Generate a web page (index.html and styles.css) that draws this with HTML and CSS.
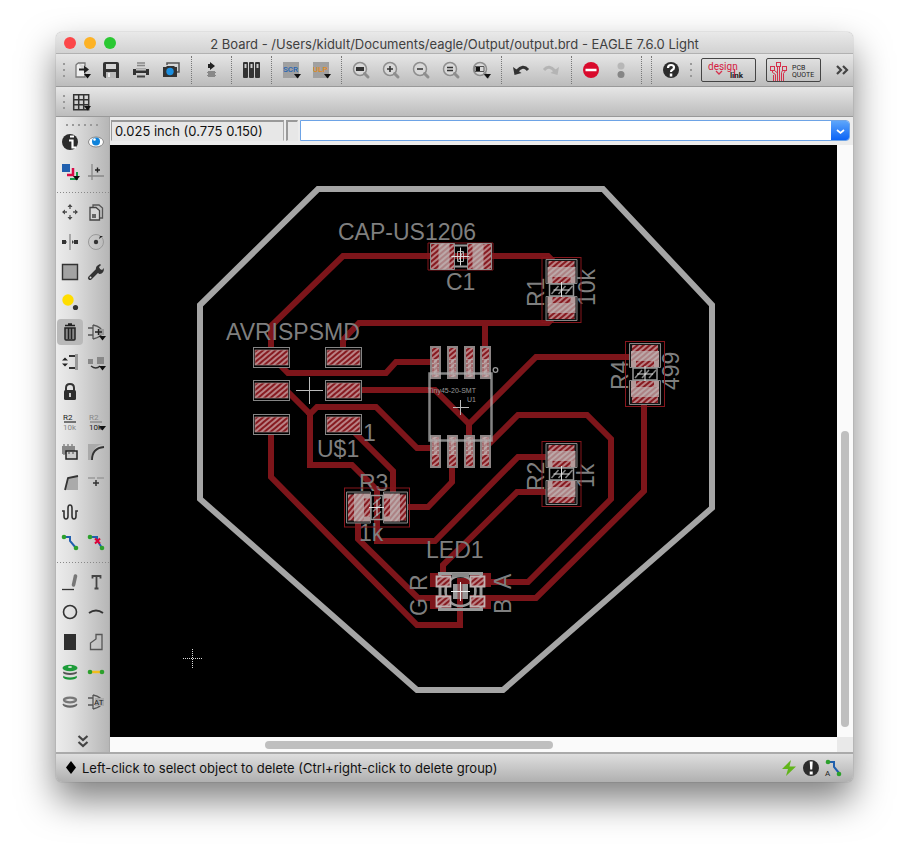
FILE: index.html
```html
<!DOCTYPE html>
<html lang="en">
<head>
<meta charset="utf-8">
<title>2 Board - output.brd</title>
<link rel="stylesheet" href="styles.css">
</head>
<body>
<svg class="defs" aria-hidden="true">
  <symbol id="drop" viewBox="0 0 20 20"><path d="M13 14h7l-3.500 4.500z" fill="#111"/></symbol>
  <symbol id="lens" viewBox="0 0 20 20"><circle cx="9" cy="9" r="6.500" fill="#d8d8d8" stroke="#8e8e8e" stroke-width="1.500"/><path d="M13.500 13.500l3.500 3.500" stroke="#8e8e8e" stroke-width="3" stroke-linecap="round"/></symbol>
</svg>
<main class="window">
  <header class="titlebar">
    <div class="lights"><button class="light close" aria-label="Close"></button><button class="light minimize" aria-label="Minimize"></button><button class="light zoom" aria-label="Zoom"></button></div>
    <h1>2 Board - /Users/kidult/Documents/eagle/Output/output.brd - EAGLE 7.6.0 Light</h1>
  </header>

  <nav class="toolbar" aria-label="Actions">
    <i class="grip"></i>
    <button aria-label="Open"><svg viewBox="0 0 20 20"><path d="M7 3h7v3M14 13v4H5V5l2-2" fill="#eee" stroke="#777" stroke-width="1.300"/><path d="M8 9.500h6" stroke="#222" stroke-width="2.200"/><path d="M13 5.500l5 4-5 4z" fill="#222"/><use href="#drop"/></svg></button>
    <button aria-label="Save"><svg viewBox="0 0 20 20"><path d="M2 4q0-2 2-2h12q2 0 2 2v14H4l-2-2z" fill="#333"/><path d="M5 4h10v5H5z" fill="#d6d6d6"/><path d="M5 12h10v6H5z" fill="#bbb"/><path d="M7 13h2v4H7z" fill="#eee"/></svg></button>
    <button aria-label="Print"><svg viewBox="0 0 20 20"><path d="M6 3h8M6 5.500h8" stroke="#888" stroke-width="1.600"/><path d="M2 9h3v1.500h10V9h3v6h-3v-2H5v2H2z" fill="#333"/><path d="M5 8h10v1.500H5z" fill="#aaa"/><path d="M6 15.500h8v2H6z" fill="#444"/></svg></button>
    <button aria-label="Export image"><svg viewBox="0 0 20 20"><path d="M6 5V3h12v9h-3" fill="none" stroke="#555" stroke-width="1.500"/><path d="M2 7h3l1-1h7l1 1h2v10H2z" fill="#333"/><circle cx="9" cy="11.500" r="3.700" fill="#1b8fe0"/></svg></button>
    <i class="sep"></i>
    <button aria-label="Switch to schematic"><svg viewBox="0 0 20 20"><path d="M9 2l5 4-5 4V8H7V4h2z" fill="#222"/><path d="M7 11h7v6H7z" fill="#888"/><path d="M6 12.500h9M6 15.500h9" stroke="#888"/></svg></button>
    <i class="sep"></i>
    <button aria-label="Library"><svg viewBox="0 0 20 20"><g fill="#333"><rect x="2" y="2" width="5" height="16" rx="1"/><rect x="8" y="2" width="5" height="16" rx="1"/><rect x="14" y="2" width="5" height="16" rx="1"/></g><path d="M3.500 4h2v4h-2zM9.500 4h2v4h-2zM15.500 4h2v4h-2z" fill="#ccc"/></svg></button>
    <i class="sep"></i>
    <button aria-label="Run script"><svg viewBox="0 0 20 20"><path d="M2 2h16v16H2z" fill="#a0a0a0"/><text class="tiny script" x="2" y="12">SCR</text><use href="#drop"/></svg></button>
    <button aria-label="Run ULP"><svg viewBox="0 0 20 20"><path d="M2 2h16v16H2z" fill="#a0a0a0"/><text class="tiny ulp" x="2" y="12">ULP</text><use href="#drop"/></svg></button>
    <i class="sep"></i>
    <button aria-label="Zoom to fit"><svg viewBox="0 0 20 20"><use href="#lens"/><path d="M5 7h8v4H5z" fill="#333"/></svg></button>
    <button aria-label="Zoom in"><svg viewBox="0 0 20 20"><use href="#lens"/><path d="M6 9h6M9 6v6" stroke="#333" stroke-width="1.600"/></svg></button>
    <button aria-label="Zoom out"><svg viewBox="0 0 20 20"><use href="#lens"/><path d="M6 9h6" stroke="#333" stroke-width="1.600"/></svg></button>
    <button aria-label="Redraw"><svg viewBox="0 0 20 20"><use href="#lens"/><path d="M6 7.500h6M6 10.500h6" stroke="#333" stroke-width="1.600"/></svg></button>
    <button aria-label="Zoom to selection"><svg viewBox="0 0 20 20"><use href="#lens"/><path d="M4 6.500h9v5H4z" fill="none" stroke="#555"/><path d="M5 7h4v4H5z" fill="#111"/><use href="#drop"/></svg></button>
    <i class="sep"></i>
    <button aria-label="Undo"><svg viewBox="0 0 20 20"><path d="M17 10Q12 4 6 11" fill="none" stroke="#333" stroke-width="3"/><path d="M2 7l1.500 8 7-2z" fill="#333"/></svg></button>
    <button aria-label="Redo" disabled><svg viewBox="0 0 20 20"><path d="M3 10Q8 4 14 11" fill="none" stroke="#b4b4b4" stroke-width="3"/><path d="M18 7l-1.500 8-7-2z" fill="#b4b4b4"/></svg></button>
    <i class="sep"></i>
    <button aria-label="Stop"><svg viewBox="0 0 20 20"><circle cx="10" cy="10" r="8" fill="#d90a2c"/><path d="M4.500 10h11" stroke="#fff" stroke-width="2.600"/></svg></button>
    <button aria-label="Go" disabled><svg viewBox="0 0 20 20"><circle cx="10" cy="6" r="3.500" fill="#b7b7b7"/><circle cx="10" cy="14.500" r="3.500" fill="#858585"/></svg></button>
    <i class="sep"></i><i class="sep"></i>
    <button aria-label="Help"><svg viewBox="0 0 20 20"><circle cx="10" cy="10" r="8" fill="#2c2c2c"/><path d="M7 8q0-3 3-3t3 2.500q0 1.500-1.500 2.300T10 12" fill="none" stroke="#fff" stroke-width="2.200"/><path d="M8.800 13.500h2.500v3H8.800z" fill="#fff"/></svg></button>
    <i class="grip"></i>
    <a class="brand" href="#" aria-label="design link"><svg viewBox="0 0 53 22"><text class="design" x="6" y="11">design</text><path d="M14 12l3 3 3-3M32.500 10v9" fill="none" stroke="#d5304c" stroke-width="1.300"/><text class="link" x="28" y="19">link</text></svg></a>
    <a class="brand" href="#" aria-label="PCB Quote"><svg viewBox="0 0 53 22"><g fill="none" stroke="#d5304c"><rect x="3.500" y="7.500" width="4" height="4"/><rect x="9.500" y="3.500" width="4" height="4"/><rect x="15.500" y="7.500" width="4" height="4"/><path d="M5.500 11.500v2l3 2V22M7.500 11.500l3 2.500v8M10.500 8v6M12.500 8v14M15.500 11.500l-1 2V22M18.500 11.500l-2 3V22M6.500 16v6"/></g><text class="pcb" x="25" y="11">PCB</text><text class="pcb" x="25" y="18">QUOTE</text></svg></a>
    <button class="more" aria-label="More tools"><svg viewBox="0 0 20 20"><path d="M4 6l4 4-4 4M10 6l4 4-4 4" fill="none" stroke="#444" stroke-width="2.200"/></svg></button>
  </nav>

  <nav class="toolbar parameters" aria-label="Parameters">
    <i class="grip"></i>
    <button aria-label="Grid"><svg viewBox="0 0 20 20"><path d="M2.700 2.700h15v15h-15zM7.700 2.700v15M12.700 2.700v15M2.700 7.700h15M2.700 12.700h15" fill="none" stroke="#333" stroke-width="1.500"/><use href="#drop"/></svg></button>
  </nav>

  <div class="body">
    <aside class="palette" aria-label="Tools">
      <i class="palette-grip"></i>
      <div class="tools">
        <button aria-label="Info"><svg viewBox="0 0 20 20"><circle cx="10" cy="10" r="8" fill="#2c2c2c"/><path d="M10 4.500h4M9 8.500h3.500v7H16" stroke="#fff" stroke-width="2.200" fill="none"/></svg></button>
        <button aria-label="Show"><svg viewBox="0 0 20 20"><ellipse cx="10" cy="10" rx="7.500" ry="5" fill="#fff" stroke="#888"/><circle cx="10" cy="9.500" r="4" fill="#0f83db"/><circle cx="8.500" cy="7.500" r="1.300" fill="#fff"/></svg></button>
        <button aria-label="Display"><svg viewBox="0 0 20 20"><path d="M2 2h8v8H2z" fill="#205fae"/><path d="M13 6v7H7" fill="none" stroke="#d90a46" stroke-width="2.500"/><path d="M17 10v7H10" fill="none" stroke="#169b45" stroke-width="2"/><use href="#drop"/></svg></button>
        <button aria-label="Mark"><svg viewBox="0 0 20 20"><path d="M6 2v16M2 14h16" stroke="#888" stroke-width="1.300"/><path d="M9 8h5M11.500 5.500v5" stroke="#222" stroke-width="1.400"/></svg></button>
      </div>
      <hr>
      <div class="tools">
        <button aria-label="Move"><svg viewBox="0 0 20 20"><path d="M10 2l2.500 3h-5zM10 18l2.500-3h-5zM2 10l3-2.500v5zM18 10l-3-2.500v5z" fill="#444"/><path d="M10 4v3M10 13v3M4 10h3M13 10h3" stroke="#555" stroke-width="1.300"/></svg></button>
        <button aria-label="Copy"><svg viewBox="0 0 20 20"><path d="M7 5V3h6l3.500 3v10H14" fill="none" stroke="#555" stroke-width="1.300"/><path d="M4 5.500h6l3.500 3V18H4z" fill="#d6d6d6" stroke="#444" stroke-width="1.300"/><path d="M6 12h4v4H6z" fill="#666"/></svg></button>
        <button aria-label="Mirror"><svg viewBox="0 0 20 20"><path d="M10 2v16" stroke="#888" stroke-width="1.300"/><path d="M2 8h4v4H2zM14 8h4v4h-4z" fill="#333"/><path d="M6 10l1-1v2zM14 10l-2-2v4z" fill="#444"/></svg></button>
        <button aria-label="Rotate"><svg viewBox="0 0 20 20"><circle cx="10" cy="10" r="7.500" fill="none" stroke="#999"/><circle cx="10" cy="10" r="2.200" fill="#333"/><path d="M13 7l1-3h3z" fill="#222"/></svg></button>
        <button aria-label="Group"><svg viewBox="0 0 20 20"><path d="M2.500 2.500h15v15h-15z" fill="#a3a3a3" stroke="#333" stroke-width="1.400"/></svg></button>
        <button aria-label="Change"><svg viewBox="0 0 20 20"><path d="M4 16l8-8" stroke="#333" stroke-width="4" stroke-linecap="round"/><path d="M10 8q-1-4 4-6l1 1-2 2 1 2 2 1 2-2q0 6-5 6z" fill="#333"/><circle cx="4.500" cy="15.500" r="1" fill="#ddd"/></svg></button>
        <button aria-label="Paint"><svg viewBox="0 0 20 20"><circle cx="8" cy="8" r="5.700" fill="#ffdd00"/><circle cx="15.500" cy="15.500" r="2.600" fill="#333"/></svg></button>
        <span></span>
        <button class="active" aria-label="Delete" aria-pressed="true"><svg viewBox="0 0 20 20"><path d="M5 3.500h10M8 2h4" stroke="#222" stroke-width="1.500"/><path d="M5 6h10v11q0 1-1 1H6q-1 0-1-1z" fill="#888" stroke="#222" stroke-width="1.500"/><path d="M8.500 6v11M11.500 6v11" stroke="#222" stroke-width="1.500"/></svg></button>
        <button aria-label="Add"><svg viewBox="0 0 20 20"><path d="M2 6h5M2 13h5M7 3v14M7 3q9 2 9 7t-9 7" fill="none" stroke="#555" stroke-width="1.300"/><path d="M12 7h6v6h-6z" fill="#999"/><path d="M9 10h7M12.500 7v6" stroke="#222" stroke-width="1.400"/><use href="#drop"/></svg></button>
        <button aria-label="Pin swap"><svg viewBox="0 0 20 20"><path d="M2 8.500l3-3 3 3zM2 11.500l3 3 3-3z" fill="#222"/><path d="M9 4h7M9 16h7" stroke="#333" stroke-width="2"/><path d="M16.500 2v16" stroke="#999" stroke-width="3"/></svg></button>
        <button aria-label="Replace"><svg viewBox="0 0 20 20"><path d="M2 7h5v5H2zM11 5h7v7h-7z" fill="#888"/><path d="M5 14q5 4 9 0" fill="none" stroke="#333" stroke-width="1.300"/><use href="#drop"/></svg></button>
        <button aria-label="Lock"><svg viewBox="0 0 20 20"><path d="M6 9V6q0-4 4-4t4 4v3" fill="none" stroke="#333" stroke-width="2"/><rect x="4" y="8" width="12" height="10" rx="1.500" fill="#2c2c2c"/><path d="M9 11h2v4H9z" fill="#ccc"/></svg></button>
        <span></span>
        <button aria-label="Name"><svg viewBox="0 0 20 20"><text class="tiny dark" x="3" y="8">R2</text><path d="M4 10h12" stroke="#444" stroke-width="1.400"/><text class="tiny" x="3" y="18">10k</text></svg></button>
        <button aria-label="Value"><svg viewBox="0 0 20 20"><text class="tiny" x="3" y="8">R2</text><path d="M4 10h12" stroke="#888" stroke-width="1.400"/><text class="tiny dark" x="3" y="18">10k</text><use href="#drop"/></svg></button>
        <button aria-label="Smash"><svg viewBox="0 0 20 20"><path d="M2 4h13v8H2z" fill="#888"/><path d="M4 2v11M8 2v11M12 2v11" stroke="#888" stroke-width="1.500"/><path d="M6 9h11v8H6z" fill="#ccc" stroke="#222" stroke-width="1.500"/><path d="M8 10h2v2H8zM12 10h2v2h-2z" fill="#888"/></svg></button>
        <button aria-label="Miter"><svg viewBox="0 0 20 20"><path d="M2 2h16Q6 3 6 18H2z" fill="#aaa"/><path d="M18 5Q6 6 6 18" fill="none" stroke="#333" stroke-width="1.800"/></svg></button>
        <button aria-label="Split"><svg viewBox="0 0 20 20"><path d="M5 17L8 6l10-2v14H5z" fill="#aaa"/><path d="M5 18L8 6l10-2" fill="none" stroke="#333" stroke-width="1.800"/></svg></button>
        <button aria-label="Optimize"><svg viewBox="0 0 20 20"><path d="M2 6h7M11 6h7" stroke="#999" stroke-width="1.300"/><path d="M7 11h6M10 8v6" stroke="#333" stroke-width="1.500"/></svg></button>
        <button aria-label="Meander"><svg viewBox="0 0 20 20"><path d="M2 9h2v5q0 3 2 3t2-3V6q0-3 2-3t2 3v8q0 3 2 3t2-3V9h2" fill="none" stroke="#333" stroke-width="1.600"/></svg></button>
        <span></span>
        <button aria-label="Route"><svg viewBox="0 0 20 20"><path d="M4 5h6v4l6 7" fill="none" stroke="#205fae" stroke-width="2"/><circle cx="4" cy="5" r="2.300" fill="#2ca02c"/><circle cx="16" cy="16" r="2.300" fill="#2ca02c"/></svg></button>
        <button aria-label="Ripup"><svg viewBox="0 0 20 20"><path d="M4 5h7v3l5 8" fill="none" stroke="#205fae" stroke-width="2"/><circle cx="4" cy="5" r="2.300" fill="#2ca02c"/><circle cx="16" cy="16" r="2.300" fill="#2ca02c"/><path d="M9 6.500l5 5M14 6.500l-5 5" stroke="#e00037" stroke-width="2"/></svg></button>
      </div>
      <hr>
      <div class="tools">
        <button aria-label="Line"><svg viewBox="0 0 20 20"><path d="M2 17.500h12" stroke="#333" stroke-width="1.300"/><path d="M15.500 4l-2 9" stroke="#777" stroke-width="3.500" stroke-linecap="round"/></svg></button>
        <button aria-label="Text"><svg viewBox="0 0 20 20"><path d="M6.500 6.500V4h8v2.500M10.500 4v12.500M8.500 16.500h4" fill="none" stroke="#444" stroke-width="1.800"/></svg></button>
        <button aria-label="Circle"><svg viewBox="0 0 20 20"><circle cx="10" cy="10" r="6.500" fill="none" stroke="#333" stroke-width="1.600"/></svg></button>
        <button aria-label="Arc"><svg viewBox="0 0 20 20"><path d="M3 11q7-5 14 0" fill="none" stroke="#333" stroke-width="1.900"/></svg></button>
        <button aria-label="Rectangle"><svg viewBox="0 0 20 20"><path d="M4 2h12v16H4z" fill="#2f2f2f"/></svg></button>
        <button aria-label="Polygon"><svg viewBox="0 0 20 20"><path d="M4.500 17.500V11L10 7V2.500h6v15z" fill="none" stroke="#555" stroke-width="1.300"/></svg></button>
        <button aria-label="Via"><svg viewBox="0 0 20 20"><ellipse cx="10" cy="15" rx="7" ry="2.700" fill="#199537"/><ellipse cx="10" cy="13" rx="7" ry="2.500" fill="#ddd"/><ellipse cx="10" cy="10.500" rx="7" ry="2.500" fill="#555"/><ellipse cx="10" cy="8.500" rx="7" ry="2.500" fill="#ddd"/><ellipse cx="10" cy="6" rx="7.500" ry="3.200" fill="#1d9c3a"/><ellipse cx="10" cy="5" rx="2" ry="1" fill="#cfe8cf"/></svg></button>
        <button aria-label="Signal"><svg viewBox="0 0 20 20"><path d="M4 10h12" stroke="#f2bd1d" stroke-width="2.500"/><circle cx="4" cy="10" r="2.300" fill="#2ca02c"/><circle cx="16" cy="10" r="2.300" fill="#2ca02c"/></svg></button>
        <button aria-label="Hole"><svg viewBox="0 0 20 20"><ellipse cx="10" cy="12.500" rx="7.300" ry="3.200" fill="#666"/><ellipse cx="10" cy="10.500" rx="7.300" ry="3" fill="#ddd"/><ellipse cx="10" cy="8" rx="6" ry="2.400" fill="#ddd" stroke="#777" stroke-width="2.400"/></svg></button>
        <button aria-label="Attribute"><svg viewBox="0 0 20 20"><path d="M2 6h5M2 13h5M7 3v14M7 3q9 2 9 7t-9 7" fill="none" stroke="#555" stroke-width="1.300"/><path d="M9 6h9v8H9z" fill="#a9a9a9"/><text class="tiny dark" x="8" y="13">AT</text></svg></button>
      </div>
      <button class="palette-more" aria-label="More tools"><svg viewBox="0 0 20 20"><path d="M5.500 4l4.500 4 4.500-4M5.500 10l4.500 4 4.500-4" fill="none" stroke="#444" stroke-width="2.200"/></svg></button>
    </aside>

    <section class="editor">
      <div class="command-row">
        <output class="coords">0.025 inch (0.775 0.150)</output>
        <span class="cell"></span>
        <div class="combo"><input type="text" aria-label="Command line"><button aria-label="Command history"><svg viewBox="0 0 18 20"><path d="M6 9l3.500 3L13 9" fill="none" stroke="#fff" stroke-width="1.700"/></svg></button></div>
      </div>
      <div class="view">
        <svg class="board" viewBox="110 145 727 592" role="img" aria-label="Board layout">
          <defs>
            <pattern id="hatch" width="4" height="4" patternUnits="userSpaceOnUse" patternTransform="rotate(50)"><path d="M0 0h4v4H0z" fill="#b98285"/><path d="M0 0h2v4H0z" fill="#861a20"/></pattern>
            <pattern id="pale" width="4" height="4" patternUnits="userSpaceOnUse" patternTransform="rotate(50)"><path d="M0 0h4v4H0z" fill="#bba8a8"/><path d="M0 0h2v4H0z" fill="#ad8284"/></pattern>
            <g id="avrpad"><rect x=".5" y=".5" width="36" height="20" fill="#000" stroke="#858585"/><rect x="2" y="3" width="33" height="15" fill="url(#hatch)" stroke="#a98b8b" stroke-width=".7"/></g>
            <g id="icpad"><rect x="1" y="1" width="9" height="31" fill="url(#hatch)" stroke="#8d8585" stroke-width="2"/><path d="M2 13h7v18H2z" fill="url(#pale)"/><path d="M3 14v16M8 14v16" stroke="#8f3036" stroke-width=".8" stroke-dasharray="3 1"/></g>
            <g id="chip">
              <rect x="-19.500" y="-32.500" width="39" height="65" fill="none" stroke="#86161d"/>
              <path d="M-15.500-30.500h31v24h-31zM-15.500 6.500h31v24h-31z" fill="#181818" stroke="#858585"/>
              <path d="M-13-29h26v22h-26zM-13 7h26v22h-26z" fill="url(#hatch)"/>
              <path d="M-14-23h28v10h-28zM-14 13h28v10h-28z" fill="url(#pale)"/>
              <path d="M-14-13h5v6h-5zM9-13h5v6H9zM-14 7h5v6h-5zM9 7h5v6H9z" fill="#b39a9a"/>
              <path d="M-12-6h24V6h-24z" fill="none" stroke="#999" stroke-width="1.500"/>
              <path d="M-10 4l7-8M-3 4l7-8M4 4l7-8" stroke="#888" stroke-width="1.500"/>
              <path d="M-8 0H8M0-8V7" stroke="#ddd"/>
            </g>
          </defs>
          <path d="M110 145h727v592H110z"/>
          <g class="trace">
            <path d="M271 352v-26l72-70h205l9 9M343 352v-12l16-17h189l8-8M485 323v28M278 363l10 10h98l10-11h37"/>
            <path d="M360 390h75l34 34v16M469 424l67-67h105M288 392l22 22v51h42l25 25v51h58l83-84h42"/>
            <path d="M308 416l9-9h59l41 41h16M350 428l43 43v25M271 430v47l146 148h43v-44h15"/>
            <path d="M358 515v24l60 59h25M400 507h28l24-25v-20M443 578v-13l74-73h43"/>
            <path d="M485 448l33-33h69l24 24v60l-83 83h-42M644 400v91l-108 107h-48"/>
          </g>
          <path d="M318 189h285l109 116v203L503 690h-86L200 499V305z" fill="none" stroke="#a5a5a5" stroke-width="6"/>
          <g class="label">
            <text x="338" y="240">CAP-US1206</text><text x="446" y="290">C1</text><text x="226" y="340">AVRISPSMD</text><text x="317" y="457">U$1</text><text x="363" y="441">1</text><text x="359" y="491">R3</text><text x="359" y="541">1k</text><text x="426" y="558">LED1</text>
            <text transform="translate(544 307) rotate(-90)">R1</text><text transform="translate(595 306) rotate(-90)">10k</text><text transform="translate(628 390) rotate(-90)">R4</text><text transform="translate(679 390) rotate(-90)">499</text><text transform="translate(544 491) rotate(-90)">R2</text><text transform="translate(594 488) rotate(-90)">1k</text><text transform="translate(427 591) rotate(-90)">R</text><text transform="translate(427 616) rotate(-90)">G</text><text transform="translate(511 589) rotate(-90)">A</text><text transform="translate(511 614) rotate(-90)">B</text>
          </g>
          <use href="#avrpad" x="253" y="347"/><use href="#avrpad" x="253" y="380"/><use href="#avrpad" x="253" y="414"/>
          <use href="#avrpad" x="325" y="347"/><use href="#avrpad" x="325" y="380"/><use href="#avrpad" x="325" y="414"/>
          <use href="#icpad" x="430" y="346"/><use href="#icpad" x="447" y="346"/><use href="#icpad" x="464" y="346"/><use href="#icpad" x="480" y="346"/>
          <g transform="translate(921 814) rotate(180)"><use href="#icpad" x="430" y="346"/><use href="#icpad" x="446" y="346"/><use href="#icpad" x="463" y="346"/><use href="#icpad" x="480" y="346"/></g>
          <path d="M429.500 373.500h62v67h-62z" fill="none" stroke="#b0b0b0" stroke-opacity=".75" stroke-width="2.500"/>
          <circle cx="495.500" cy="370" r="2.300" fill="none" stroke="#999" stroke-width="1.300"/>
          <text class="part" x="428" y="393">Tiny45-20-SMT</text><text class="part" x="467" y="402">U1</text>
          <use href="#chip" x="561.500" y="290"/><use href="#chip" x="645" y="374"/><use href="#chip" x="561.500" y="474"/>
          <use href="#chip" transform="translate(377 507.500) rotate(-90) scale(-1 1)"/>
          <g transform="translate(460.500 256.500)">
            <path d="M-32.500-13.500h65v27h-65z" fill="none" stroke="#86161d"/><path d="M-30-13h24v26h-24zM7-13h24v26H7z" fill="url(#hatch)" stroke="#909090"/><path d="M-22-13H-11v26h-11zM12-13h11v26H12z" fill="url(#pale)"/><path d="M-6-11H7M-6 10H7" stroke="#999" stroke-width="2"/><path d="M-3-5h6V5h-6zM-2 4l4-8" fill="none" stroke="#aaa"/><path d="M-9 0H9M0-9V9" stroke="#ddd"/>
          </g>
          <g>
            <path d="M430 573h21v14h-21zM470 573h21v14h-21zM430 595h21v14h-21zM470 595h21v14h-21z" fill="#7d151a"/>
            <path d="M438 573.500h45M438 609.500h45M440 574v35M481 574v35" fill="none" stroke="#999" stroke-width="3"/>
            <circle cx="460.500" cy="591" r="15" fill="none" stroke="#999" stroke-width="2.500"/><path d="M446 584v15M475 584v15" stroke="#999" stroke-width="2"/>
            <path d="M452 573h17v4h-17z" fill="#888"/>
            <path d="M436.500 576.500h14v10h-14zM470.500 576.500h14v10h-14zM436.500 596.500h14v10h-14zM470.500 596.500h14v10h-14z" fill="url(#hatch)" stroke="#c0b0b0" stroke-width="1.800"/>
            <path d="M453 584h15v15h-15z" fill="#999"/><path d="M460 581v23" stroke="#7d151a" stroke-width="5" stroke-opacity=".5"/><path d="M451 591.500h19M460.500 582v19" stroke="#eee"/>
          </g>
          <path d="M296 390.500h27M309.500 377v27M453 407.500h16M460.500 400v15" stroke="#bbb"/>
          <path d="M183 658.500h20M192.500 649v20" stroke="#ddd" stroke-dasharray="1 1"/>
        </svg>
        <div class="scroll vertical"><i></i></div>
        <div class="scroll horizontal"><i></i></div>
        <span class="corner"></span>
      </div>
    </section>
  </div>

  <footer class="status">
    <svg class="diamond" viewBox="0 0 10 14"><path d="M5 0l5 6.500L5 13 0 6.500z"/></svg>
    <p>Left-click to select object to delete (Ctrl+right-click to delete group)</p>
    <svg class="state" viewBox="0 0 20 20"><path d="M12 2L3 11h6l-2 7 10-9.500h-6.500z" fill="#61b51b"/></svg>
    <svg class="state" viewBox="0 0 20 20"><circle cx="10" cy="10" r="8" fill="#2c2c2c"/><path d="M8.700 3.500h3l-.5 8h-2z" fill="#fff"/><path d="M8.700 13.500h3v3h-3z" fill="#fff"/></svg>
    <svg class="state" viewBox="0 0 20 20"><path d="M5 4h6v5l5 6" fill="none" stroke="#205fae" stroke-width="2"/><circle cx="5" cy="4" r="2.300" fill="#2ca02c"/><circle cx="16" cy="16" r="2.300" fill="#2ca02c"/><text class="tiny dark" x="2" y="18">A</text></svg>
  </footer>
</main>
</body>
</html>
```

FILE: styles.css
```css
* { box-sizing: border-box; }

body {
  margin: 0;
  padding: 32px 56px 80px;
  min-height: 100vh;
  display: flex;
  background: #fff;
  color: #111;
  font: 13px/16px Inter, "Liberation Sans", sans-serif;
}

button {
  border: 0;
  padding: 0;
  background: none;
  display: grid;
  place-items: center;
}

.defs { position: absolute; width: 0; height: 0; }

.window {
  flex: 1;
  min-width: 0;
  display: flex;
  flex-direction: column;
  border-radius: 6px;
  overflow: hidden;
  background: #ececec;
  box-shadow: 0 0 1px rgba(0, 0, 0, .5), 0 18px 36px rgba(0, 0, 0, .5);
}

.titlebar {
  height: 22px;
  padding: 0 8px;
  display: grid;
  grid-template-columns: 60px 1fr 60px;
  align-items: center;
  background: linear-gradient(#e9e9e9, #d2d2d2);
  border-bottom: 1px solid #b1b1b1;
}
.titlebar h1 {
  margin: 0;
  padding-top: 2px;
  text-align: center;
  white-space: nowrap;
  font-size: 13px;
  font-weight: 400;
  color: #404040;
}
.lights { display: flex; gap: 8px; }
.light { width: 12px; height: 12px; border-radius: 50%; }
.close { background: #fc4749; }
.minimize { background: #fdb225; }
.zoom { background: #2ac832; }

.toolbar {
  height: 33px;
  padding-left: 3px;
  display: flex;
  align-items: center;
  background: linear-gradient(#e6e6e6, #bcbcbc);
  border-bottom: 1px solid #999;
}
.toolbar.parameters { height: 30px; }
.toolbar button { flex: 0 0 30px; height: 30px; }
.toolbar button svg, .tools svg, .palette-more svg { width: 20px; height: 20px; display: block; }
.grip {
  flex: 0 0 10px;
  height: 18px;
  background: radial-gradient(circle, #999 1px, transparent 1px) center / 10px 6px;
}
.toolbar > .grip:first-child { margin-right: -3px; }
.sep { flex: 0 0 10px; align-self: stretch; display: flex; justify-content: center; padding: 2px 0; }
.sep::before { content: ""; border-left: 1px dotted #777; }
.brand {
  flex: 0 0 55px;
  height: 24px;
  margin: 0 5px;
  border: 1px solid #444;
  border-radius: 2px;
}
.brand svg { display: block; width: 53px; height: 22px; }
.toolbar .more { flex: 0 0 20px; margin-left: auto; }

.tiny { font: 8px Roboto, sans-serif; fill: #888; }
.tiny.dark { fill: #222; }
.tiny.script { fill: #2465b4; font-weight: 500; }
.tiny.ulp { fill: #e18a1a; font-weight: 500; }
.design { font: 10px Roboto, sans-serif; fill: #d5203e; }
.link { font: bold 8px Roboto, sans-serif; fill: #222; }
.pcb { font: 7px Roboto, sans-serif; fill: #222; }

.body { flex: 1; display: flex; min-height: 0; }

.palette {
  flex: 0 0 54px;
  padding-left: 1px;
  display: flex;
  flex-direction: column;
  background: linear-gradient(90deg, #ececec, #e0e0e0 30%, #b6b6b6);
  border-right: 1px solid #aaa;
}
.palette-grip {
  height: 10px;
  margin: 0 7px;
  background: radial-gradient(circle, #999 1px, transparent 1px) left bottom / 6px 4px repeat-x;
}
.palette hr {
  width: 100%;
  height: 10px;
  margin: 0;
  border: 0;
  background: repeating-linear-gradient(90deg, #888 0 1px, transparent 1px 3px) center / 100% 1px no-repeat;
}
.tools { display: grid; grid-template-columns: 26px 26px; grid-auto-rows: 30px; }
.tools .active { height: 26px; align-self: center; border-radius: 4px; background: #b9b9b9; }
.palette-more { height: 35px; padding-top: 14px; }

.editor { flex: 1; min-width: 0; display: flex; flex-direction: column; }
.command-row {
  height: 28px;
  padding: 3px 3px 4px 1px;
  display: flex;
  gap: 2px;
  align-items: stretch;
}
.coords, .cell {
  border: 1px solid transparent;
  border-top: 2px solid #999;
  border-left-color: #999;
  background: #e7e7e7;
}
.coords { flex: 0 0 173px; padding-left: 3px; border-right-color: #aaa; white-space: nowrap; line-height: 18px; }
.cell { flex: 0 0 12px; border-left: 2px solid #999; }
.combo { flex: 1; display: flex; border: 1px solid #6da3e6; border-radius: 0 4px 4px 0; overflow: hidden; background: #fff; }
.combo input { flex: 1; min-width: 0; border: 0; padding: 0 4px; outline: 0; font: inherit; }
.combo button { flex: 0 0 18px; background: linear-gradient(#5da6fb, #0b63f6); }
.combo svg { width: 18px; height: 20px; }

.view { flex: 1; min-height: 0; display: grid; grid-template: minmax(0, 1fr) 15px / minmax(0, 1fr) 16px; }
.board { display: block; width: 100%; height: 100%; background: #000; }
.trace path { fill: none; stroke: #7d151a; stroke-width: 6; }
.label { font: 23px "Liberation Sans", sans-serif; fill: #7f7f7f; }
.part { font: 7px "Liberation Sans", sans-serif; fill: #999; }
.scroll { display: grid; background: #fafafa; }
.scroll i { background: #bfbfbf; border-radius: 4px; }
.vertical { grid-template-rows: 286fr 296fr 10fr; padding: 0 4px; }
.horizontal { grid-template-columns: 155fr 288fr 284fr; padding: 4px 0 3px; }
.vertical i { grid-row: 2; }
.horizontal i { grid-column: 2; }
.corner { background: #e9e9e9; }

.status {
  height: 30px;
  padding: 0 10px;
  display: flex;
  align-items: center;
  gap: 2px;
  background: linear-gradient(#dedede, #b0b0b0);
  border-top: 2px solid #aaa;
}
.status p { flex: 1; margin: 0 0 0 4px; white-space: nowrap; }
.diamond { width: 10px; height: 14px; }
.state { width: 20px; height: 20px; }
```
